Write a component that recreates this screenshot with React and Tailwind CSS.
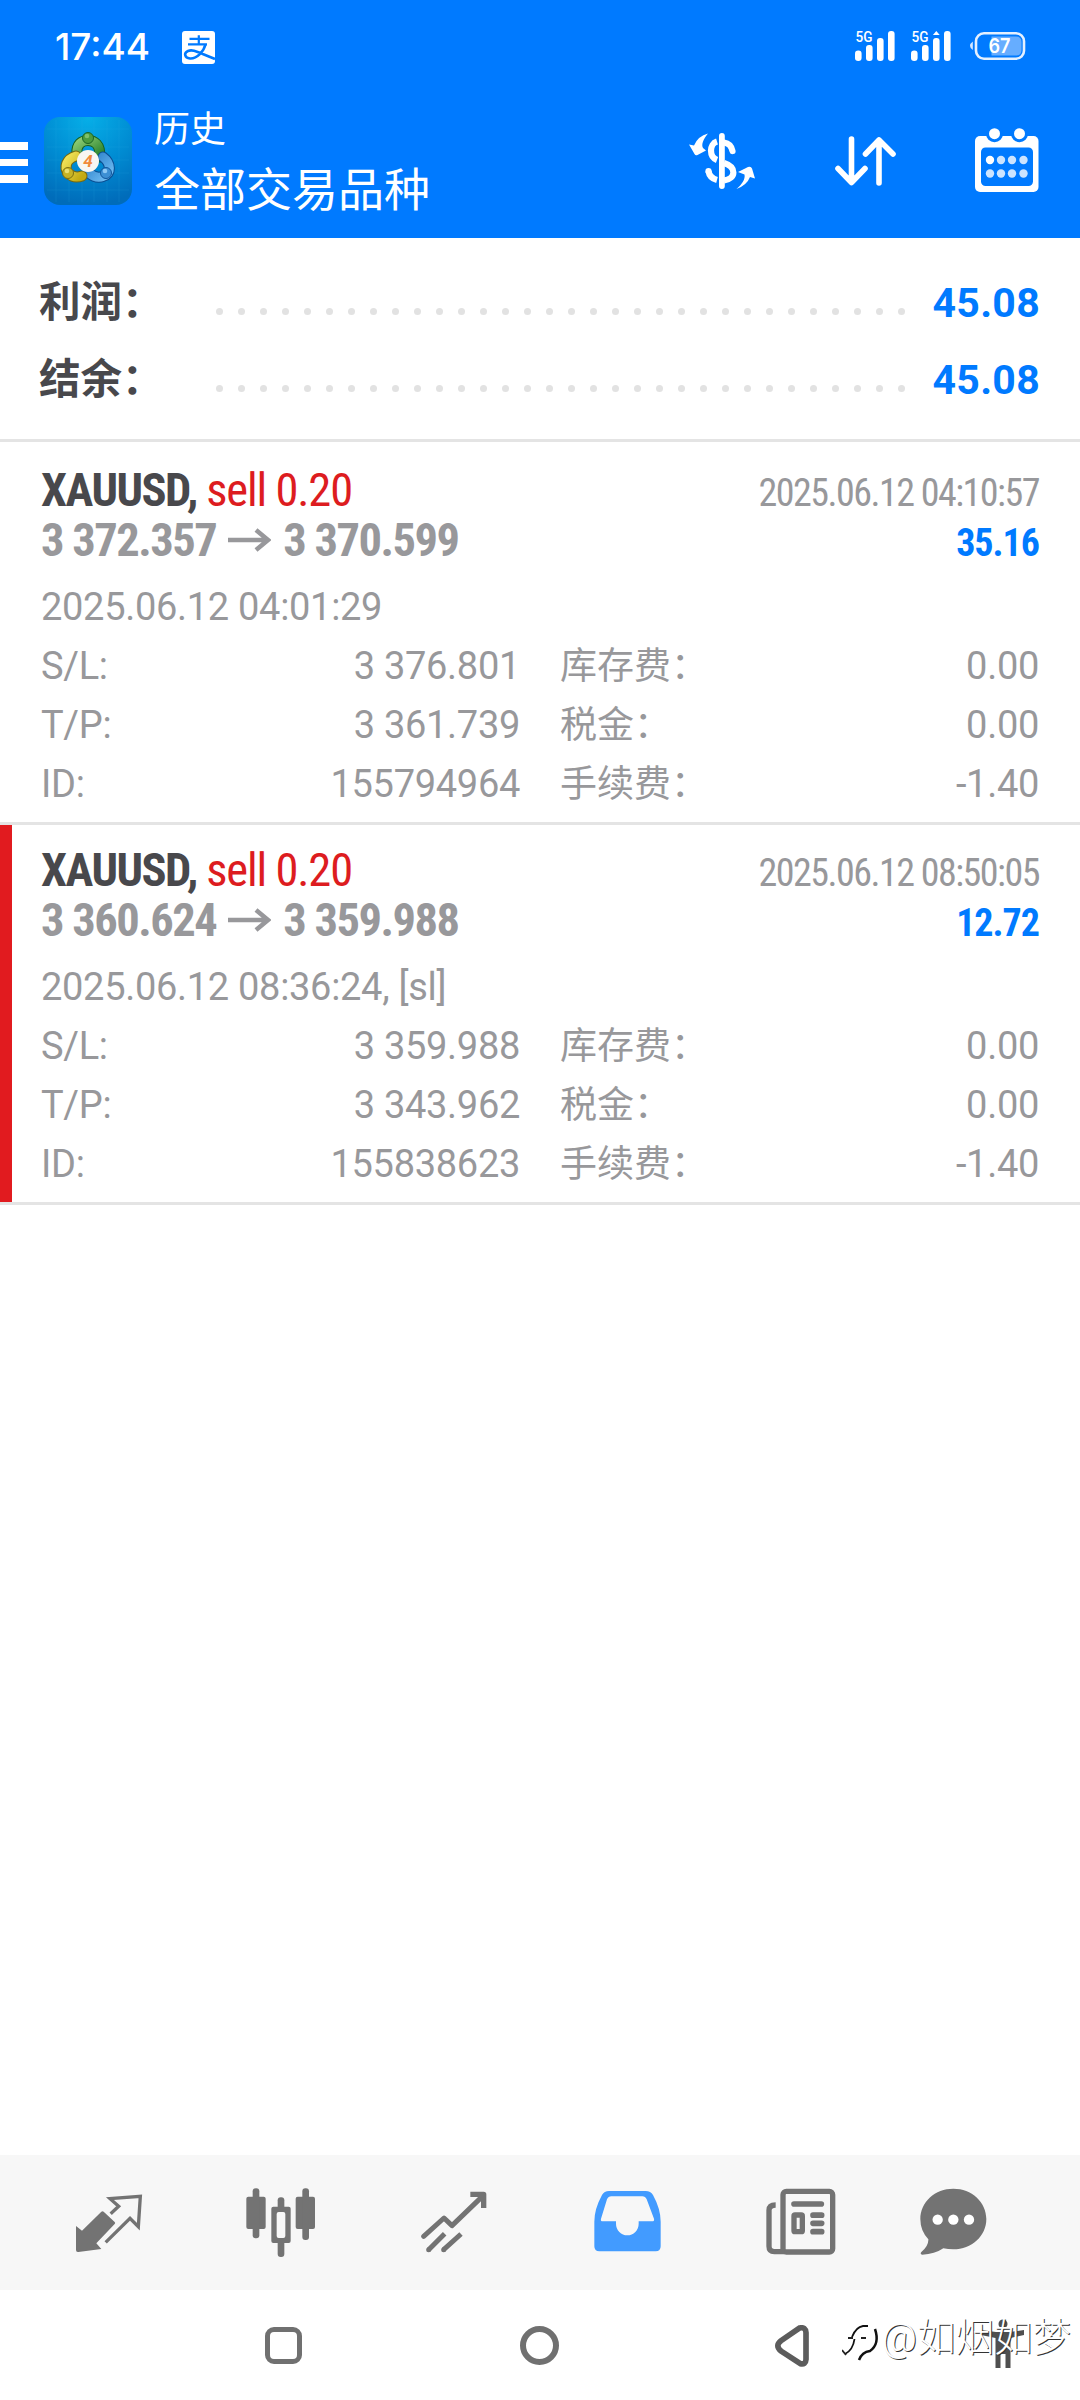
const deals = [
  {
    id: "155794964",
    symbol: "XAUUSD",
    side: "sell 0.20",
    open: "3 372.357",
    close: "3 370.599",
    openTime: "2025.06.12 04:01:29",
    closeTime: "2025.06.12 04:10:57",
    profit: "35.16",
    sl: "3 376.801",
    tp: "3 361.739",
    swap: "0.00",
    tax: "0.00",
    fee: "-1.40",
    stopped: false,
  },
  {
    id: "155838623",
    symbol: "XAUUSD",
    side: "sell 0.20",
    open: "3 360.624",
    close: "3 359.988",
    openTime: "2025.06.12 08:36:24, [sl]",
    closeTime: "2025.06.12 08:50:05",
    profit: "12.72",
    sl: "3 359.988",
    tp: "3 343.962",
    swap: "0.00",
    tax: "0.00",
    fee: "-1.40",
    stopped: true,
  },
];

const DOTS = Array.from({ length: 32 }, (_, i) => i);

function Signal({ active }) {
  return (
    <svg width="40" height="38" viewBox="0 -8 40 38" fill="#fff" className="-mt-2.5">
      <text
        x="0.500"
        y="11"
        fontSize="15"
        fontWeight="500"
        fontFamily="Roboto, sans-serif"
        textLength="17"
        lengthAdjust="spacingAndGlyphs"
      >
        5G
      </text>
      <rect x="0" y="19.500" width="6.600" height="10.500" rx="3.200" />
      <rect x="11" y="14" width="6.600" height="16" rx="3" />
      <rect x="22" y="7" width="6.600" height="23" rx="3" />
      <rect x="33" y="0" width="6.600" height="30" rx="3" />
      {active && <path d="M25.300 0l3.400 4h-6.800z" />}
    </svg>
  );
}

function Battery() {
  return (
    <svg width="56" height="28" viewBox="0 0 56 28" className="-mt-0.5 ml-[19px]">
      <path d="M2.800 9.500v8.600Q0 16 0 13.800T2.800 9.500z" fill="#d6e8ff" />
      <rect x="6" y="1.300" width="48" height="25.400" rx="8" fill="none" stroke="#e4f0ff" strokeWidth="2.600" />
      <path d="M21.500 4.500H46q5.500 0 5.500 5.500v8q0 5.500-5.500 5.500H21.500z" fill="#66adff" />
      <text
        x="29.500"
        y="20.500"
        fontSize="19.500"
        fontWeight="600"
        fontFamily="Inter, sans-serif"
        textAnchor="middle"
        textLength="22"
        lengthAdjust="spacingAndGlyphs"
        fill="#fff"
      >
        67
      </text>
    </svg>
  );
}

function AlipayIcon() {
  return (
    <svg width="33" height="33" viewBox="0 0 33 33">
      <rect width="33" height="33" rx="3" fill="#fff" />
      <g fill="none" stroke="#007aff" strokeWidth="2.200">
        <path d="M7.500 7.800h20M16.800 4.300v9M6 13.300h19" />
        <path d="M23.500 13.300C22 20 15 28 8 27.500 2.500 27 1.500 22 6 20c5-2 9 1 27 8" strokeWidth="2.600" />
      </g>
    </svg>
  );
}

function StatusBar() {
  return (
    <div className="flex h-[94px] items-center pr-[54px] pl-[55px] text-white">
      <span className="w-[127px] font-[Inter,sans-serif] text-[37px] font-medium">17:44</span>
      <AlipayIcon />
      <div className="ml-auto flex items-center gap-4">
        <Signal />
        <Signal active />
      </div>
      <Battery />
    </div>
  );
}

function AppLogo() {
  return (
    <svg width="88" height="88" viewBox="0 0 88 88">
      <defs>
        <radialGradient id="sky" cx=".5" cy="0" r="1">
          <stop offset="0" stopColor="#06afe8" />
          <stop offset=".55" stopColor="#008bd2" />
          <stop offset="1" stopColor="#006cba" />
        </radialGradient>
        <linearGradient id="green" x1="0" y1="0" x2="1" y2="1">
          <stop offset="0" stopColor="#8ccb72" />
          <stop offset="1" stopColor="#237f2a" />
        </linearGradient>
        <linearGradient id="gold" x1="0" y1="0" x2="1" y2="1">
          <stop offset="0" stopColor="#f2e45a" />
          <stop offset="1" stopColor="#c3a910" />
        </linearGradient>
        <linearGradient id="azure" x1="0" y1="0" x2="1" y2="1">
          <stop offset="0" stopColor="#2a7fc9" />
          <stop offset="1" stopColor="#6fbcf2" />
        </linearGradient>
      </defs>
      <rect width="88" height="88" rx="16" fill="url(#sky)" />
      <path
        d="M12 3v82M25 3v82M38 3v82M50 3v82M63 3v82M75 3v82M3 12h82M3 30h82M3 43h82M3 56h82M3 73h82"
        stroke="#30b4e8"
        strokeWidth=".7"
        opacity=".2"
      />
      <g strokeLinecap="round" fill="none">
        <path d="M33 37C32 27 38 23.500 44 23.500S57 27 55.500 40" stroke="#17611f" strokeWidth="11" />
        <path d="M33 37C32 27 38 23.500 44 23.500S57 27 55.500 40" stroke="url(#green)" strokeWidth="9" />
        <path d="M45 56Q52 62 59 59.500C68 57 67 46 59 40" stroke="#0b4e92" strokeWidth="11" />
        <path d="M45 56Q52 62 59 59.500C68 57 67 46 59 40" stroke="url(#azure)" strokeWidth="9" />
        <path d="M32 39C22 42 20 50 24 56Q30 62 38 59" stroke="#746812" strokeWidth="11" />
        <path d="M32 39C22 42 20 50 24 56Q30 62 38 59" stroke="url(#gold)" strokeWidth="9" />
      </g>
      <circle cx="44" cy="21" r="5.500" fill="#4c9c3f" stroke="#1b6626" />
      <circle cx="43" cy="19" r="2.300" fill="#7fc06a" />
      <circle cx="24" cy="56" r="5.500" fill="#c8b325" stroke="#7d7013" />
      <circle cx="23" cy="54" r="2.300" fill="#eadf70" />
      <circle cx="62" cy="56" r="5.500" fill="#3c8fd4" stroke="#12579c" />
      <circle cx="61" cy="54" r="2.300" fill="#8cc8f4" />
      <circle cx="44" cy="44" r="11" fill="#f8f6f2" />
      <text
        x="44"
        y="50"
        fontSize="17"
        fontWeight="700"
        fontStyle="italic"
        fontFamily="Roboto, sans-serif"
        textAnchor="middle"
        fill="#f08a3c"
      >
        4
      </text>
    </svg>
  );
}

function CurrencyIcon() {
  return (
    <svg width="67" height="56" viewBox="689 133 67 56">
      <path
        d="M708 133.500C703.500 139 701 144.500 703 148L706 150.500 697.500 155Q695.500 156 694.500 154L689 144.500 694 145.500Q698 136 708 133.500z"
        fill="#fff"
      />
      <path
        d="M736.500 189C742 184.500 745.500 179 744.500 174.500L738 172 748 167Q751 166 752 168.500L755 178.500 750 177Q747 185 736.500 189z"
        fill="#fff"
      />
      <rect x="719" y="133" width="5.800" height="56" rx="2.900" fill="#fff" />
      <g fill="none" stroke="#fff" strokeWidth="6.200">
        <path d="M717 141.500C709 144 709 157 717 160" />
        <path d="M724 142.500Q731 143.500 732.500 151" strokeLinecap="round" />
        <path d="M708.500 171Q709.500 178 717 180" />
        <path d="M708.500 171v.5" strokeLinecap="round" />
        <path d="M724 163C736.500 167 736.500 178.500 724 180.500" />
      </g>
    </svg>
  );
}

function SortIcon() {
  return (
    <svg
      width="62"
      height="50"
      viewBox="0 0 62 50"
      fill="none"
      stroke="#fff"
      strokeWidth="5.600"
      strokeLinecap="round"
      strokeLinejoin="round"
    >
      <path d="M16.500 3v43M3 32.500l13.500 14L30 32.500M44 47V4M30.500 18L44 4l14 14" />
    </svg>
  );
}

function CalendarIcon() {
  return (
    <svg width="64" height="64" viewBox="0 0 64 64">
      <rect y="8" width="63.500" height="56" rx="5" fill="#fff" />
      <circle cx="19.500" cy="5.700" r="8.500" fill="#007aff" />
      <circle cx="44.500" cy="5.700" r="8.500" fill="#007aff" />
      <circle cx="19.500" cy="5.700" r="5.500" fill="#fff" />
      <circle cx="44.500" cy="5.700" r="5.500" fill="#fff" />
      <rect x="6" y="19.500" width="52" height="38.500" rx="4.500" fill="#007aff" />
      {[15, 26, 37, 48.5].map((cx, i) => (
        <g key={cx} fill="#cce4ff">
          <circle cx={cx} cy="32" r="4.200" fill={i === 0 ? "#fff" : "#cce4ff"} />
          <circle cx={cx} cy="45.500" r="4.200" />
        </g>
      ))}
    </svg>
  );
}

function Toolbar() {
  return (
    <div className="flex h-36 items-start text-white">
      <div className="mt-12 flex w-7 flex-col gap-[9px]">
        <span className="h-[7.5px] bg-white" />
        <span className="h-[7.5px] bg-white" />
        <span className="h-[7.5px] bg-white" />
      </div>
      <div className="mt-[23px] ml-4">
        <AppLogo />
      </div>
      <div className="mt-[11px] ml-[22px]">
        <p className="text-[36px] leading-[50px]">历史</p>
        <h1 className="text-[46px] leading-[70px]">全部交易品种</h1>
      </div>
      <div className="mt-[39px] mr-[41px] ml-auto flex">
        <CurrencyIcon />
        <div className="mt-[3px] ml-[79px]">
          <SortIcon />
        </div>
        <div className="-mt-[5px] ml-[78px]">
          <CalendarIcon />
        </div>
      </div>
    </div>
  );
}

function SummaryRow({ label, value }) {
  return (
    <div className="flex h-[77px] items-center pr-10 pl-[39px]">
      <span className="w-[177px] text-[41.5px] leading-[60px] font-bold text-[#48484c]">{label}</span>
      <div className="mt-[17px] flex gap-[15px]">
        {DOTS.map((i) => (
          <span key={i} className="size-[7px] rounded-full bg-[#e2e2e2]" />
        ))}
      </div>
      <span className="ml-auto text-[41px] leading-[60px] font-bold tracking-[0.3px] text-[#007aff]">{value}</span>
    </div>
  );
}

function Arrow() {
  return (
    <svg width="43" height="24" viewBox="0 0 43 24" className="mx-3" fill="none" stroke="#98989b" strokeWidth="4.500">
      <path d="M0 12h40M28 2l12 10-12 10" />
    </svg>
  );
}

function DetailRow({ left, leftValue, right, rightValue }) {
  return (
    <div className="flex h-[59px] leading-[59px]">
      <span>{left}</span>
      <span className="ml-auto">{leftValue}</span>
      <div className="ml-10 flex w-[479px] justify-between">
        <span className="text-[37px] tracking-normal">{right}</span>
        <span>{rightValue}</span>
      </div>
    </div>
  );
}

function Deal({ deal }) {
  return (
    <article className="flex h-[380px] flex-row border-b-3 border-b-[#e4e4e4]">
      <div className={`w-3 ${deal.stopped ? "bg-[#e11b1f]" : "bg-white"}`} />
      <div className="flex-1 pt-5 pr-[41px] pl-[29px] text-[#98989b]">
        <div className="flex h-[50px] items-baseline justify-between font-['Roboto_Condensed',Roboto,sans-serif] leading-[50px]">
          <div className="text-[46.5px] [font-stretch:75%]">
            <span className="font-bold tracking-[-1.5px] text-[#48484c]">{deal.symbol}, </span>
            <span className="tracking-[-1.15px] text-[#dd1c20]">{deal.side}</span>
          </div>
          <span className="text-[38px] tracking-[-1.5px] [font-stretch:75%]">{deal.closeTime}</span>
        </div>
        <div className="flex h-[50px] items-baseline justify-between font-['Roboto_Condensed',Roboto,sans-serif] leading-[50px] font-bold">
          <div className="flex items-center text-[46.5px] tracking-[-1.5px] [font-stretch:75%]">
            {deal.open}
            <Arrow />
            {deal.close}
          </div>
          <span className="text-[38px] tracking-[-1px] text-[#007aff] [font-stretch:75%]">{deal.profit}</span>
        </div>
        <div className="mt-[13px] text-[38px] tracking-[-0.3px]">
          <p className="leading-[59px]">{deal.openTime}</p>
          <DetailRow left="S/L:" leftValue={deal.sl} right="库存费：" rightValue={deal.swap} />
          <DetailRow left="T/P:" leftValue={deal.tp} right="税金：" rightValue={deal.tax} />
          <DetailRow left="ID:" leftValue={deal.id} right="手续费：" rightValue={deal.fee} />
        </div>
      </div>
    </article>
  );
}

function TabBar() {
  return (
    <nav className="flex h-[135px] items-start bg-[#f7f7f7] pt-[33px] pl-[75px] text-[#737373]">
      {/* quotes */}
      <svg width="68" height="60" viewBox="225 128 204 180" className="mt-1.5 shrink-0">
        <path
          d="M228 224l18 14 58-57q4-3 7 0l33 31q3 3 0 6l-55 58 15 17-69 9q-7 1-7-6z"
          fill="currentColor"
        />
        <path
          d="M332 187l24-22-26-23 91-7-6 91-25-25-73 72"
          fill="none"
          stroke="currentColor"
          strokeWidth="10"
        />
      </svg>
      {/* charts */}
      <svg width="70" height="70" viewBox="739 112 210 210" className="ml-[103px] shrink-0" fill="currentColor">
        <rect x="740" y="138" width="58" height="97" rx="6" />
        <rect x="759" y="113" width="20" height="150" rx="9" />
        <rect x="888" y="138" width="58" height="97" rx="6" />
        <rect x="908" y="113" width="20" height="155" rx="9" />
        <rect x="834" y="140" width="20" height="179" rx="9" />
        <rect x="815" y="168" width="58" height="109" rx="6" />
        <rect x="831" y="184" width="26" height="78" rx="6" fill="#f7f7f7" />
      </svg>
      {/* trade */}
      <svg
        width="66"
        height="62"
        viewBox="184 120 198 186"
        className="mt-[3px] ml-[105px] shrink-0"
        fill="none"
        stroke="currentColor"
        strokeWidth="15"
        strokeLinejoin="round"
      >
        <path d="M192 256l61-55 24 23 88-85" strokeLinecap="round" />
        <path d="M332 130h40v41" strokeWidth="16" />
        <path d="M207 296l48-48M252 296l52-47" />
        <path d="M207 296h.1M252 296h.1" strokeLinecap="round" />
      </svg>
      {/* history */}
      <svg width="67" height="61" viewBox="702 122 201 183" className="mt-[3px] ml-[107px] shrink-0">
        <path
          fillRule="evenodd"
          fill="#429bff"
          d="M747 122h110q15 0 22 12 23 42 23 80v74q0 15-15 15H718q-15 0-15-15v-74q0-38 23-80 7-12 21-12zM754 138q-9 0-13 9l-18 58q-2 8 5 8h40v7a34 35 0 0 0 68 0v-7h40q8 0 6-8l-22-58q-4-9-13-9z"
        />
      </svg>
      {/* news */}
      <svg width="70" height="67" viewBox="139 112 210 201" className="ml-[105px] shrink-0">
        <g fill="none" stroke="currentColor" strokeWidth="16">
          <rect x="190" y="122" width="149" height="182" rx="10" />
          <path d="M168 163q-20 0-20 16v108q0 16 16 16h30" />
          <rect x="223" y="193" width="25" height="50" rx="3" strokeWidth="16" />
          <path d="M223 160h82M280 193.500h26M280 218h26M280 243h26" strokeLinecap="round" strokeWidth="17" />
        </g>
      </svg>
      {/* chat */}
      <svg width="67" height="68" viewBox="599 112 201 204" className="ml-[84px] shrink-0">
        <path
          d="M699 114c55 0 99 40 99 91s-44 91-99 91q-16 0-30-3-26 18-63 19-8-1-3-8 22-19 21-38-24-26-24-61c0-51 44-91 99-91z"
          fill="currentColor"
        />
        <circle cx="652" cy="207" r="15.500" fill="#fff" />
        <circle cx="699" cy="207" r="15.500" fill="#fff" />
        <circle cx="746" cy="207" r="15.500" fill="#fff" />
      </svg>
    </nav>
  );
}

function SystemNav() {
  return (
    <div className="relative flex h-[110px] items-start pt-[35px] pl-[265px]">
      <span className="mt-0.5 size-[37px] rounded-[9px] border-[5.5px] border-[#707070]" />
      <span className="mt-px ml-[218px] size-[39px] rounded-full border-[6px] border-[#707070]" />
      <svg width="34" height="42" viewBox="167 524 102 126" className="ml-[216px]">
        <path
          d="M241 533q18-4 19 14v80q-1 17-17 13l-58-38q-19-16 0-31z"
          fill="none"
          stroke="#5c5c5c"
          strokeWidth="17"
        />
      </svg>
      {/* accessibility figure */}
      <svg width="44" height="50" viewBox="0 0 44 50" className="-mt-1.5 ml-[172px]" fill="#4f4f4f">
        <circle cx="22" cy="5" r="4.500" />
        <path d="M0 11l15 2h14l14-2v5l-13.500 3v30h-5V35h-5v14h-5V19L0 16z" />
      </svg>
      <div className="absolute top-[22px] right-[9px] flex items-center text-white">
        <svg width="40" height="44" viewBox="0 0 40 44" fill="none" className="mt-1">
          <path d="M3 36Q11 32 12.500 21M10 19Q14 9 21 8h5" stroke="#111" strokeWidth="1.800" />
          <path d="M33 11Q38 26 28 33 20 34 17 42" stroke="#111" strokeWidth="2.500" />
          <path d="M0 32l4 5M6 20h5M19 20h5" stroke="#222" strokeWidth="1.800" />
        </svg>
        <span className="text-[38.5px] leading-[52px] font-light [text-shadow:1px_1px_0_#333]">@如烟如梦</span>
      </div>
    </div>
  );
}

export default function App() {
  return (
    <div className="flex h-[2400px] w-[1080px] flex-col overflow-hidden bg-white font-[Roboto,'Noto_Sans_CJK_SC',sans-serif]">
      <header className="h-[238px] bg-[#007aff]">
        <StatusBar />
        <Toolbar />
      </header>
      <section className="mb-[3px] h-[204px] border-b-3 border-[#e4e4e4] pt-[26px]">
        <SummaryRow label="利润：" value="45.08" />
        <SummaryRow label="结余：" value="45.08" />
      </section>
      <main className="flex-1">
        {deals.map((deal) => (
          <Deal key={deal.id} deal={deal} />
        ))}
      </main>
      <TabBar />
      <SystemNav />
    </div>
  );
}
